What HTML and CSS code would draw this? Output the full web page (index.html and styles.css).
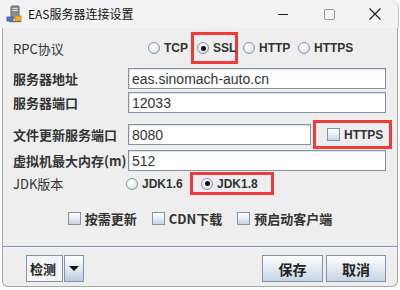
FILE: index.html
```html
<!DOCTYPE html>
<html lang="zh">
<head>
<meta charset="utf-8">
<link rel="stylesheet" href="styles.css">
</head>
<body>
<div class="window">
  <div class="titlebar">
    <svg class="app-icon" width="16" height="18" viewBox="0 0 16 18">
      <rect x="5" y="1" width="8" height="12" rx="1" fill="#8a8f96" stroke="#5f646a" stroke-width="1"/>
      <rect x="6.5" y="3" width="5" height="1" fill="#d8dbe0"/>
      <rect x="6.5" y="5" width="5" height="1" fill="#d8dbe0"/>
      <rect x="1" y="12" width="6" height="4" fill="#4a7fc1" stroke="#2f5b92" stroke-width="0.8"/>
      <rect x="9" y="11" width="6" height="5" fill="#f2b01e" stroke="#c78a0a" stroke-width="0.8"/>
      <rect x="3" y="16" width="12" height="1.2" fill="#6b6f75"/>
    </svg>
    <span class="title">EAS服务器连接设置</span>
    <div class="controls">
      <span class="ctl"><span class="min-line"></span></span>
      <span class="ctl"><span class="max-box"></span></span>
      <span class="ctl">
        <svg width="12" height="12" viewBox="0 0 12 12"><path d="M0.5 0.5 L11.5 11.5 M11.5 0.5 L0.5 11.5" stroke="#1a1a1a" stroke-width="1.1" fill="none"/></svg>
      </span>
    </div>
  </div>
  <div class="content">
    <div class="row r1">
      <span class="label plain">RPC协议</span>
      <span class="radio-item w-tcp"><span class="radio"></span><span class="opt">TCP</span></span>
      <span class="redbox rb-ssl"><span class="radio-item"><span class="radio on"></span><span class="opt">SSL</span></span></span>
      <span class="radio-item w-http"><span class="radio"></span><span class="opt">HTTP</span></span>
      <span class="radio-item"><span class="radio"></span><span class="opt">HTTPS</span></span>
    </div>
    <div class="row r2">
      <span class="label">服务器地址</span>
      <span class="field wide">eas.sinomach-auto.cn</span>
    </div>
    <div class="row r3">
      <span class="label">服务器端口</span>
      <span class="field wide">12033</span>
    </div>
    <div class="row r4">
      <span class="label">文件更新服务端口</span>
      <span class="field short">8080</span>
      <span class="redbox rb-https"><span class="check"></span><span class="opt">HTTPS</span></span>
    </div>
    <div class="row r5">
      <span class="label">虚拟机最大内存(m)</span>
      <span class="field wide">512</span>
    </div>
    <div class="row r6">
      <span class="label plain">JDK版本</span>
      <span class="radio-item w-jdk16"><span class="radio"></span><span class="opt">JDK1.6</span></span>
      <span class="redbox rb-jdk"><span class="radio-item"><span class="radio on"></span><span class="opt">JDK1.8</span></span></span>
    </div>
    <div class="row r7">
      <span class="check-item"><span class="check"></span><span class="cjk">按需更新</span></span>
      <span class="check-item"><span class="check"></span><span class="cjk">CDN下载</span></span>
      <span class="check-item"><span class="check"></span><span class="cjk">预启动客户端</span></span>
    </div>
    <div class="separator"></div>
    <div class="bottombar">
      <span class="combo"><span class="combo-text">检测</span><span class="combo-arrow"><span class="tri"></span></span></span>
      <span class="spacer"></span>
      <span class="btn save">保存</span>
      <span class="btn cancel">取消</span>
    </div>
  </div>
</div>
</body>
</html>
```

FILE: styles.css
```css
* { box-sizing: border-box; }
html, body { margin: 0; padding: 0; }
body {
  width: 400px;
  height: 290px;
  background: #ffffff;
  font-family: "Noto Sans CJK SC", "Liberation Sans", sans-serif;
  overflow: hidden;
}
.window {
  width: 400px;
  height: 288px;
  display: flex;
  flex-direction: column;
}
.titlebar {
  height: 28px;
  flex: none;
  display: flex;
  align-items: center;
  background: #f3f3f3;
  border-top-right-radius: 8px;
  border-right: 1px solid #c8c8c8;
  width: 399px;
}
.app-icon {
  margin-left: 6px;
  flex: none;
}
.title {
  margin-left: 6px;
  font-family: "Noto Sans CJK SC", "Liberation Sans", sans-serif;
  font-size: 12px;
  color: #111;
  line-height: 1;
}
.controls {
  margin-left: auto;
  display: flex;
  height: 28px;
}
.ctl {
  width: 46px;
  height: 28px;
  display: flex;
  align-items: center;
  justify-content: center;
}
.min-line {
  width: 10px;
  height: 1px;
  background: #1a1a1a;
  margin-top: 1px;
}
.max-box {
  width: 11px;
  height: 11px;
  border: 1px solid #9a9a9a;
  border-radius: 2px;
  margin-top: 1px;
}
.content {
  margin-left: 2px;
  width: 396px;
  height: 259px;
  background: #eeeeee;
  border: 1px solid #a6a6a6;
  border-top: none;
  border-radius: 0 0 6px 6px;
  padding: 4px 10px 0 10px;
  display: flex;
  flex-direction: column;
}
.row {
  display: flex;
  align-items: center;
  flex: none;
}
.r1 { height: 32px; }
.r2 { height: 21px; margin-top: 4px; }
.r3 { height: 21px; margin-top: 3px; }
.r4 { height: 29px; margin-top: 7px; }
.r5 { height: 21px; margin-top: 1px; }
.r6 { height: 23px; margin-top: 1px; }
.r7 { height: 20px; margin-top: 13px; margin-left: -10px; margin-right: -10px; justify-content: center; gap: 15px; }
.label {
  width: 115px;
  flex: none;
  font-family: "Noto Sans CJK SC", sans-serif;
  font-weight: bold;
  font-size: 13px;
  color: #333333;
  white-space: nowrap;
  line-height: 1;
}
.label.plain { font-weight: normal; }
.field {
  flex: none;
  height: 21px;
  border: 1px solid #8592a6;
  background: #ffffff;
  box-shadow: inset 1px 1px 0 #dfe4ea;
  font-family: "Liberation Sans", Arial, sans-serif;
  font-size: 14px;
  color: #333333;
  padding-left: 3px;
  display: flex;
  align-items: center;
  white-space: nowrap;
}
.field.wide { width: 258px; }
.field.short { width: 183px; }
.radio-item {
  display: inline-flex;
  align-items: center;
  flex: none;
  gap: 4px;
}
.w-tcp { width: 43px; margin-left: 20px; }
.w-http { width: 55px; margin-left: 5px; }
.w-jdk16 { width: 64px; margin-left: -2px; }
.radio {
  width: 12px;
  height: 12px;
  border-radius: 50%;
  border: 1px solid #8793a6;
  background: radial-gradient(circle at 40% 35%, #ffffff 0%, #eef2f7 45%, #c4d0de 100%);
  flex: none;
  position: relative;
}
.radio.on::after {
  content: "";
  position: absolute;
  left: 2.5px;
  top: 2.5px;
  width: 5px;
  height: 5px;
  border-radius: 50%;
  background: #111;
}
.opt {
  font-family: "Liberation Sans", Arial, sans-serif;
  font-weight: bold;
  font-size: 12px;
  color: #333333;
  line-height: 1;
  white-space: nowrap;
}
.redbox {
  border: 3px solid #f03a3a;
  display: inline-flex;
  align-items: center;
  flex: none;
}
.rb-ssl {
  width: 47px;
  height: 32px;
  margin-left: 0;
  padding-left: 3px;
}
.rb-https {
  width: 79px;
  height: 29px;
  margin-left: 2px;
  padding-left: 11px;
  gap: 4px;
}
.rb-jdk {
  width: 84px;
  height: 23px;
  margin-left: 0;
  padding-left: 8px;
}
.check {
  width: 13px;
  height: 13px;
  border: 1px solid #8592a6;
  background: linear-gradient(to bottom, #ffffff 0%, #e6edf5 50%, #c6d4e3 100%);
  flex: none;
}
.check-item {
  display: inline-flex;
  align-items: center;
  gap: 4px;
}
.cjk {
  font-family: "Noto Sans CJK SC", sans-serif;
  font-weight: bold;
  font-size: 13px;
  color: #333333;
  line-height: 1;
  white-space: nowrap;
}
.separator {
  flex: none;
  height: 2px;
  margin: 18px -10px 0 -10px;
  border-top: 1px solid #7f8fb4;
  border-bottom: 1px solid #f8f8f8;
}
.bottombar {
  flex: none;
  height: 27px;
  margin-top: 7px;
  display: flex;
  align-items: stretch;
  padding-left: 13px;
  padding-right: 1px;
}
.combo {
  display: flex;
  flex: none;
}
.combo-text {
  width: 37px;
  border: 1px solid #8592a6;
  background: #f2f4f7;
  font-family: "Noto Sans CJK SC", sans-serif;
  font-weight: bold;
  font-size: 13px;
  color: #222;
  display: flex;
  align-items: center;
  padding-left: 3px;
}
.combo-arrow {
  width: 20px;
  margin-left: 1px;
  border: 1px solid #8592a6;
  background: linear-gradient(to bottom, #ffffff 0%, #dde7f1 55%, #b9cbdd 100%);
  display: flex;
  align-items: center;
  justify-content: center;
}
.tri {
  width: 0;
  height: 0;
  border-left: 5px solid transparent;
  border-right: 5px solid transparent;
  border-top: 5px solid #111;
}
.spacer { flex: 1; }
.btn {
  flex: none;
  border: 1px solid #8592a6;
  background: linear-gradient(to bottom, #ffffff 0%, #e8eef5 40%, #c5d5e6 100%);
  font-family: "Noto Sans CJK SC", sans-serif;
  font-weight: bold;
  font-size: 14px;
  color: #222;
  display: flex;
  align-items: center;
  justify-content: center;
}
.save { width: 61px; }
.cancel { width: 60px; margin-left: 3px; }
```
